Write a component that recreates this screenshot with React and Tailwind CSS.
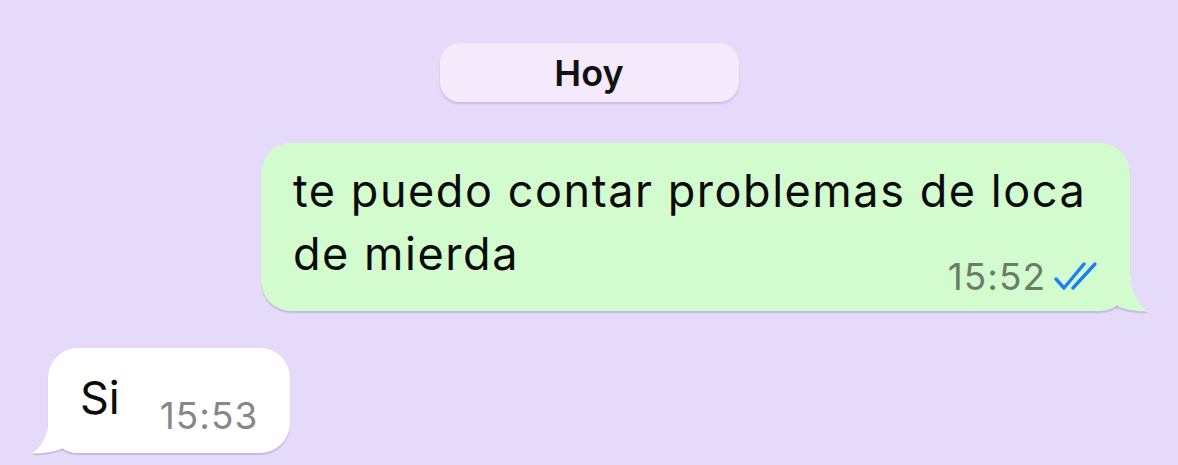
import { useState } from 'react';

function DoubleCheck() {
  return (
    <svg width="48" height="32" viewBox="0 0 48 32" fill="none" stroke="#1f7ff2" strokeWidth="3.4" strokeLinecap="round" strokeLinejoin="round">
      <path d="M2 19 L10 28 L30 4" />
      <path d="M19 28 L41 4" />
    </svg>
  );
}

const outTail = 'M0 0 L30 0 C30 30 36 44 48 51 C38 52 24 50 15 45 C10 47 5 48 0 48 Z';
const inTail = 'M50 0 L20 0 C20 30 14 44 2 51 C12 52 26 50 35 45 C40 47 45 48 50 48 Z';

function OutgoingBubble({ text, time }) {
  return (
    <div className="relative ml-auto mr-[48px] w-[869px]">
      <svg className="absolute right-[-20px] bottom-[-3px] z-0" width="50" height="54" viewBox="0 0 50 54">
        <path d={outTail} fill="#c8bde0" transform="translate(0,2)" />
      </svg>
      <div className="relative z-10 rounded-[30px] bg-[#d2fbce] pl-[32px] pr-[28px] pt-[16px] pb-[26px] shadow-[0_2px_1px_rgba(120,100,160,0.28)]">
        <p className="text-[45px] leading-[63px] text-[#0b0b0b] tracking-[1.55px]">{text}</p>
        <div className="absolute right-[28px] bottom-[7px] flex items-center gap-[8px]">
          <span className="text-[37px] tracking-[1px] text-[#6b7d69]">{time}</span>
          <DoubleCheck />
        </div>
      </div>
      <svg className="absolute right-[-20px] bottom-[-3px] z-20" width="50" height="54" viewBox="0 0 50 54">
        <path d={outTail} fill="#d2fbce" />
      </svg>
    </div>
  );
}

function IncomingBubble({ text, time }) {
  return (
    <div className="relative ml-[48px] w-fit">
      <svg className="absolute left-[-18px] bottom-[-3px] z-0" width="50" height="54" viewBox="0 0 50 54">
        <path d={inTail} fill="#c8bde0" transform="translate(0,2)" />
      </svg>
      <div className="relative z-10 flex items-end rounded-[30px] bg-white pl-[32px] pr-[32px] pt-[18px] pb-[24px] shadow-[0_2px_1px_rgba(120,100,160,0.28)]">
        <span className="text-[45px] leading-[63px] text-[#0b0b0b]">{text}</span>
        <span className="ml-[40px] translate-y-[9px] text-[37px] tracking-[1px] leading-[44px] text-[#878787]">{time}</span>
      </div>
      <svg className="absolute left-[-18px] bottom-[-3px] z-20" width="50" height="54" viewBox="0 0 50 54">
        <path d={inTail} fill="#ffffff" />
      </svg>
    </div>
  );
}

export default function App() {
  const [messages] = useState([
    { id: 1, text: 'te puedo contar problemas de loca de mierda', time: '15:52' },
  ]);

  return (
    <div className="h-[465px] w-[1178px] overflow-hidden bg-[#e6dafa] pt-[43px] font-['Inter','Liberation_Sans',sans-serif]">
      <div className="flex justify-center">
        <div className="flex h-[59px] w-[299px] items-center justify-center rounded-[20px] bg-[#f5e9fc] shadow-[0_2px_2px_rgba(120,100,160,0.25)]">
          <span className="text-[36px] font-semibold text-[#111]">Hoy</span>
        </div>
      </div>
      <div className="mt-[41px]">
        {messages.map(m => (
          <OutgoingBubble key={m.id} text={m.text} time={m.time} />
        ))}
      </div>
      <div className="mt-[37px]">
        <IncomingBubble text="Si" time="15:53" />
      </div>
    </div>
  );
}
